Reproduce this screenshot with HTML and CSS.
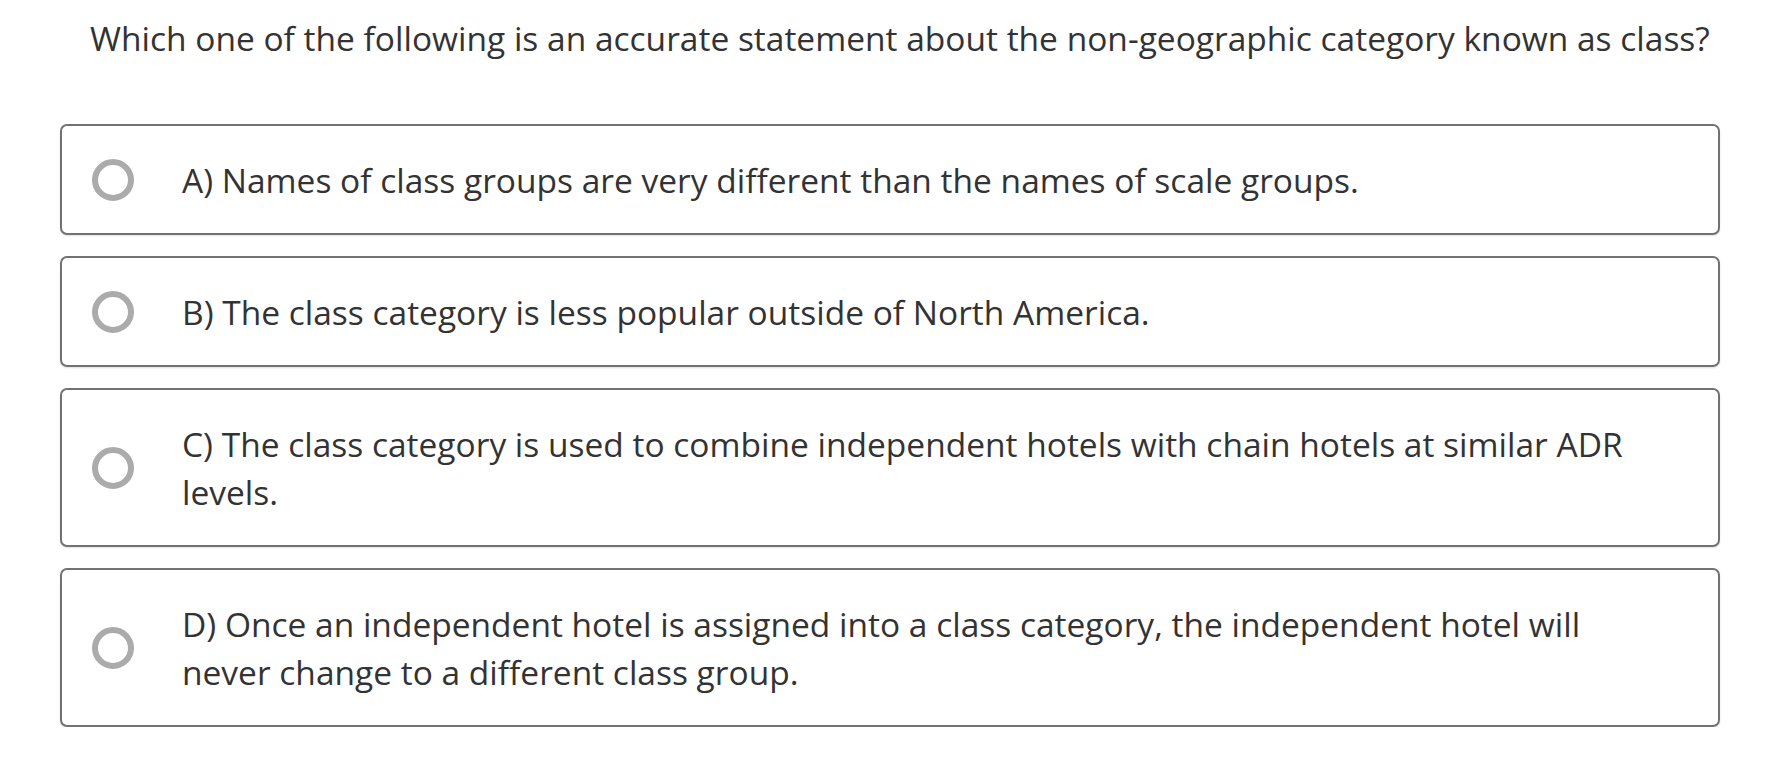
FILE: index.html
```html
<!DOCTYPE html>
<html>
<head>
<meta charset="utf-8">
<link rel="stylesheet" href="styles.css">
</head>
<body>
<div class="quiz">
  <p class="question">Which one of the following is an accurate statement about the non-geographic category known as class?</p>
  <div class="options">
    <label class="option">
      <span class="radio"></span>
      <span class="text">A) Names of class groups are very different than the names of scale groups.</span>
    </label>
    <label class="option">
      <span class="radio"></span>
      <span class="text">B) The class category is less popular outside of North America.</span>
    </label>
    <label class="option">
      <span class="radio"></span>
      <span class="text">C) The class category is used to combine independent hotels with chain hotels at similar ADR levels.</span>
    </label>
    <label class="option">
      <span class="radio"></span>
      <span class="text">D) Once an independent hotel is assigned into a class category, the independent hotel will never change to a different class group.</span>
    </label>
  </div>
</div>
</body>
</html>
```

FILE: styles.css
```css
* { box-sizing: border-box; }
html, body { margin: 0; padding: 0; background: #fff; }
body {
  font-family: "Open Sans", "Liberation Sans", sans-serif;
  color: #333333;
  font-size: 33.5px;
  line-height: 48px;
}
.quiz {
  padding: 14px 46px 0 60px;
}
.question {
  margin: 0 0 62px 30px;
}
.options {
  display: flex;
  flex-direction: column;
  gap: 21px;
}
.option {
  display: flex;
  align-items: center;
  border: 2px solid #727272;
  border-radius: 7px;
  padding: 30px 60px 29px 30px;
  box-shadow: 0 1px 2px rgba(0,0,0,0.12);
}
.radio {
  flex: 0 0 auto;
  width: 42px;
  height: 42px;
  border: 6px solid #ababab;
  border-radius: 50%;
  margin-right: 48px;
}
.text {
  flex: 1 1 auto;
}
```
